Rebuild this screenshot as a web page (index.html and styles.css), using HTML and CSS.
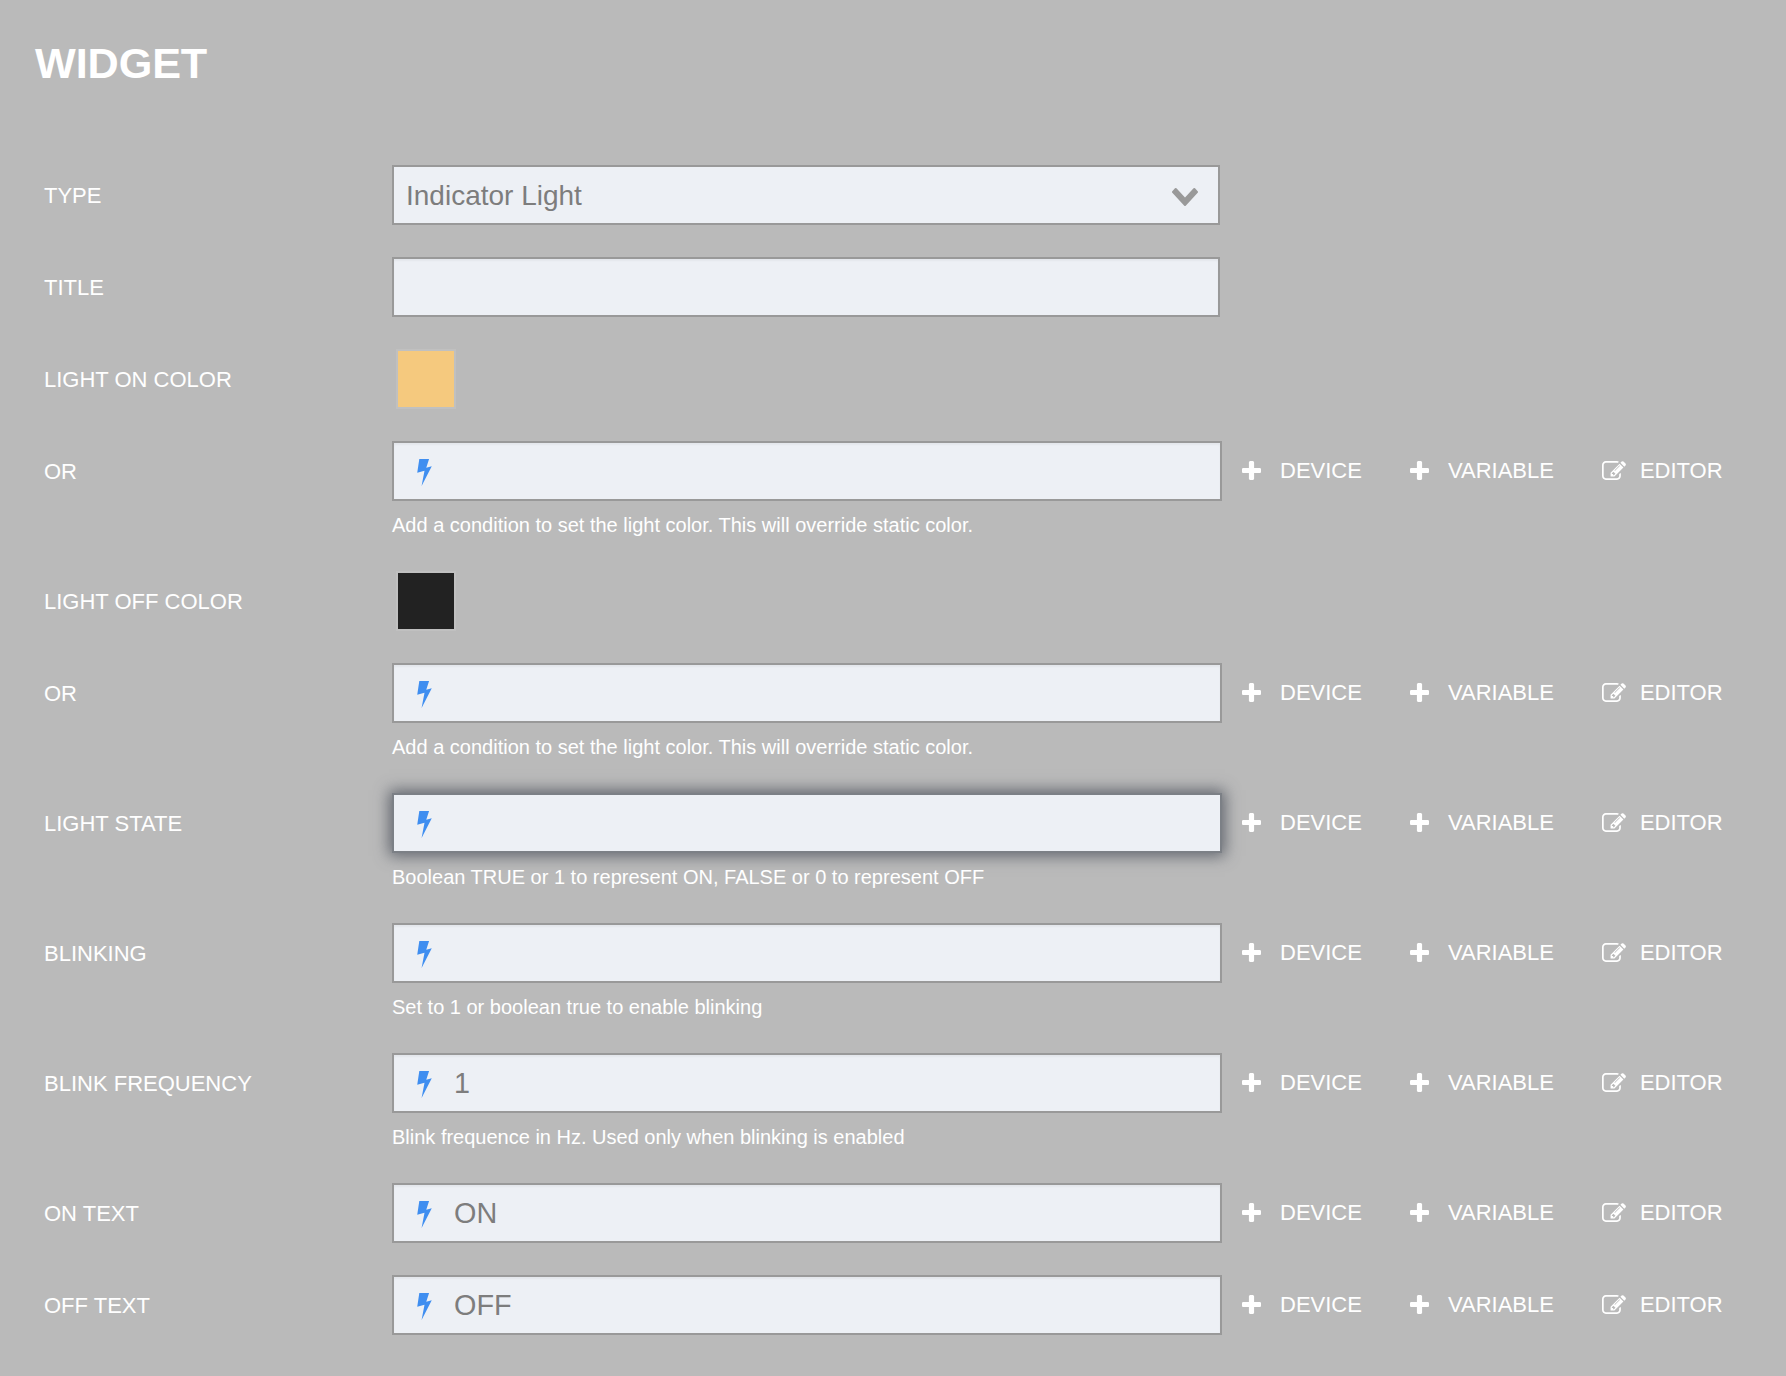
FILE: index.html
```html
<!DOCTYPE html>
<html lang="en">
<head>
<meta charset="utf-8">
<title>Widget</title>
<link rel="stylesheet" href="styles.css">
</head>
<body>
<svg class="defs" width="0" height="0" aria-hidden="true">
  <symbol id="i-bolt" viewBox="0 0 14 26"><path d="M2 0H11.4L8.7 8.4 14 7 4.2 26 7 11.3 0 13.3z"/></symbol>
  <symbol id="i-plus" viewBox="192 128 1408 1408"><path d="M1600 736v192q0 40-28 68t-68 28h-416v416q0 40-28 68t-68 28h-192q-40 0-68-28t-28-68v-416h-416q-40 0-68-28t-28-68v-192q0-40 28-68t68-28h416v-416q0-40 28-68t68-28h192q40 0 68 28t28 68v416h416q40 0 68 28t28 68z"/></symbol>
  <symbol id="i-edit" viewBox="0 128 1792 1408"><path d="M888 1184l116-116-152-152-116 116v56h96v96h56zm440-720q-16-16-33 1l-350 350q-17 17-1 33t33-1l350-350q17-17 1-33zm80 594v190q0 119-84.5 203.5t-203.5 84.5h-832q-119 0-203.5-84.5t-84.5-203.5v-832q0-119 84.5-203.5t203.5-84.5h832q63 0 117 25 15 7 18 23 3 17-9 29l-49 49q-14 14-32 8-23-6-45-6h-832q-66 0-113 47t-47 113v832q0 66 47 113t113 47h832q66 0 113-47t47-113v-126q0-13 9-22l64-64q15-15 35-7t20 29zm-96-738l288 288-672 672h-288v-288zm444 132l-92 92-288-288 92-92q28-28 68-28t68 28l152 152q28 28 28 68t-28 68z"/></symbol>
  <symbol id="i-chev" viewBox="90 533 1612 1035" preserveAspectRatio="none"><path d="M1683 808l-742 741q-19 19-45 19t-45-19l-742-741q-19-19-19-45.5t19-45.5l166-165q19-19 45-19t45 19l531 531 531-531q19-19 45-19t45 19l166 165q19 19 19 45.5t-19 45.5z"/></symbol>
</svg>
<main class="page">
  <h1 class="title">WIDGET</h1>
  <form class="form">
    <div class="row">
      <div class="label">TYPE</div>
      <div class="field field-plain select"><span class="value value-select">Indicator Light</span><svg class="chev"><use href="#i-chev"/></svg></div>
    </div>
    <div class="row">
      <div class="label">TITLE</div>
      <div class="field field-plain inset"></div>
    </div>
    <div class="row">
      <div class="label">LIGHT ON COLOR</div>
      <div class="swatch swatch-on"></div>
    </div>
    <div class="group">
      <div class="row">
        <div class="label">OR</div>
        <div class="field field-expr inset"><svg class="bolt"><use href="#i-bolt"/></svg></div>
        <div class="actions">
          <a class="action"><svg class="plus"><use href="#i-plus"/></svg>DEVICE</a>
          <a class="action"><svg class="plus"><use href="#i-plus"/></svg>VARIABLE</a>
          <a class="action action-edit"><svg class="edit"><use href="#i-edit"/></svg>EDITOR</a>
        </div>
      </div>
      <p class="hint">Add a condition to set the light color. This will override static color.</p>
    </div>
    <div class="row">
      <div class="label">LIGHT OFF COLOR</div>
      <div class="swatch swatch-off"></div>
    </div>
    <div class="group">
      <div class="row">
        <div class="label">OR</div>
        <div class="field field-expr inset"><svg class="bolt"><use href="#i-bolt"/></svg></div>
        <div class="actions">
          <a class="action"><svg class="plus"><use href="#i-plus"/></svg>DEVICE</a>
          <a class="action"><svg class="plus"><use href="#i-plus"/></svg>VARIABLE</a>
          <a class="action action-edit"><svg class="edit"><use href="#i-edit"/></svg>EDITOR</a>
        </div>
      </div>
      <p class="hint">Add a condition to set the light color. This will override static color.</p>
    </div>
    <div class="group">
      <div class="row">
        <div class="label">LIGHT STATE</div>
        <div class="field field-expr focused"><svg class="bolt"><use href="#i-bolt"/></svg></div>
        <div class="actions">
          <a class="action"><svg class="plus"><use href="#i-plus"/></svg>DEVICE</a>
          <a class="action"><svg class="plus"><use href="#i-plus"/></svg>VARIABLE</a>
          <a class="action action-edit"><svg class="edit"><use href="#i-edit"/></svg>EDITOR</a>
        </div>
      </div>
      <p class="hint">Boolean TRUE or 1 to represent ON, FALSE or 0 to represent OFF</p>
    </div>
    <div class="group">
      <div class="row">
        <div class="label">BLINKING</div>
        <div class="field field-expr inset"><svg class="bolt"><use href="#i-bolt"/></svg></div>
        <div class="actions">
          <a class="action"><svg class="plus"><use href="#i-plus"/></svg>DEVICE</a>
          <a class="action"><svg class="plus"><use href="#i-plus"/></svg>VARIABLE</a>
          <a class="action action-edit"><svg class="edit"><use href="#i-edit"/></svg>EDITOR</a>
        </div>
      </div>
      <p class="hint">Set to 1 or boolean true to enable blinking</p>
    </div>
    <div class="group">
      <div class="row">
        <div class="label">BLINK FREQUENCY</div>
        <div class="field field-expr inset"><svg class="bolt"><use href="#i-bolt"/></svg><span class="value">1</span></div>
        <div class="actions">
          <a class="action"><svg class="plus"><use href="#i-plus"/></svg>DEVICE</a>
          <a class="action"><svg class="plus"><use href="#i-plus"/></svg>VARIABLE</a>
          <a class="action action-edit"><svg class="edit"><use href="#i-edit"/></svg>EDITOR</a>
        </div>
      </div>
      <p class="hint">Blink frequence in Hz. Used only when blinking is enabled</p>
    </div>
    <div class="row">
      <div class="label">ON TEXT</div>
      <div class="field field-expr inset"><svg class="bolt"><use href="#i-bolt"/></svg><span class="value">ON</span></div>
      <div class="actions">
        <a class="action"><svg class="plus"><use href="#i-plus"/></svg>DEVICE</a>
        <a class="action"><svg class="plus"><use href="#i-plus"/></svg>VARIABLE</a>
        <a class="action action-edit"><svg class="edit"><use href="#i-edit"/></svg>EDITOR</a>
      </div>
    </div>
    <div class="row">
      <div class="label">OFF TEXT</div>
      <div class="field field-expr inset"><svg class="bolt"><use href="#i-bolt"/></svg><span class="value">OFF</span></div>
      <div class="actions">
        <a class="action"><svg class="plus"><use href="#i-plus"/></svg>DEVICE</a>
        <a class="action"><svg class="plus"><use href="#i-plus"/></svg>VARIABLE</a>
        <a class="action action-edit"><svg class="edit"><use href="#i-edit"/></svg>EDITOR</a>
      </div>
    </div>
  </form>
</main>
</body>
</html>
```

FILE: styles.css
```css
* { box-sizing: border-box; }

html, body {
  margin: 0;
  height: 100%;
}

body {
  background: #bababa;
  color: #fff;
  font-family: "Liberation Sans", Arial, Helvetica, sans-serif;
  overflow: hidden;
}

.defs { position: absolute; }

.page {
  height: 1376px;
  padding: 38px 0 0 35px;
}

.title {
  margin: 0 0 77px;
  font-size: 43.2px;
  line-height: 50px;
  font-weight: 700;
  letter-spacing: -0.1px;
  color: #fff;
}

.form {
  display: flex;
  flex-direction: column;
  gap: 32px;
  padding-left: 9px;
}

.row {
  display: flex;
  align-items: center;
  height: 60px;
}

.label {
  flex: 0 0 348px;
  padding-top: 1px;
  font-size: 22px;
  line-height: 26px;
  color: #fff;
}

.field {
  display: flex;
  align-items: center;
  height: 60px;
  background: #edf0f5;
  border: 2px solid #999;
  color: #7d7d7d;
  font-size: 28.8px;
}

.field-plain {
  width: 828px;
  padding: 0 12px;
}

.field-expr {
  width: 830px;
}

.select {
  justify-content: space-between;
  padding-right: 20px;
}

.inset {
  box-shadow: inset 0 2px 2px rgba(0, 0, 0, 0.04);
}

.focused {
  border-color: #7c8086;
  box-shadow: 0 0 14px 3px rgba(70, 75, 85, 0.75);
}

.value {
  line-height: 34px;
  color: #7d7d7d;
}

.value-select {
  font-size: 28px;
  padding-top: 1px;
}

.chev {
  width: 26px;
  height: 18px;
  fill: #999;
  margin-top: 3px;
}

.bolt {
  flex: none;
  width: 15px;
  height: 27px;
  margin: 2px 22px 0 23px;
  fill: #3f8ef0;
}

.swatch {
  width: 60px;
  height: 60px;
  margin-left: 4px;
  border: 2px solid #c0c0c0;
}

.swatch-on { background: #f5c97e; }
.swatch-off { background: #222; }

.actions {
  display: flex;
  align-items: center;
  gap: 48px;
  margin-left: 20px;
}

.action {
  display: flex;
  align-items: center;
  gap: 19px;
  font-size: 22px;
  line-height: 26px;
  color: #fff;
}

.action-edit { gap: 14px; }

.plus {
  width: 19px;
  height: 19px;
  margin-top: -1px;
  fill: #fff;
}

.edit {
  width: 24px;
  height: 19px;
  margin-top: -1px;
  fill: #fff;
}

.hint {
  margin: 12px 0 2px 348px;
  font-size: 20px;
  line-height: 24px;
  color: #fff;
}
```
